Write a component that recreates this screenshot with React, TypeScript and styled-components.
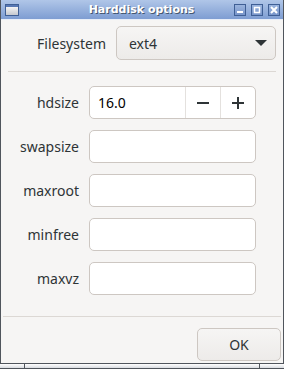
import React, { useState } from 'react';
import styled, { createGlobalStyle } from 'styled-components';

const Global = createGlobalStyle`
  html, body {
    margin: 0;
    padding: 0;
    background: #f6f5f4;
  }
  * { box-sizing: border-box; }
`;

const Frame = styled.div`
  width: 284px;
  height: 369px;
  display: flex;
  flex-direction: column;
  border-left: 1px solid #50555c;
  border-right: 1px solid #50555c;
  background: #f6f5f4;
  font-family: 'Noto Sans', 'DejaVu Sans', sans-serif;
  color: #2e3436;
`;

const TitleBar = styled.div`
  height: 20px;
  display: flex;
  align-items: center;
  padding: 0 3px 0 4px;
  background: linear-gradient(#b0c6e8, #7e9dd2);
  border-bottom: 1px solid #e8eef8;
`;

const Title = styled.div`
  flex: 1;
  text-align: center;
  font-family: 'DejaVu Sans', sans-serif;
  font-weight: bold;
  font-size: 11px;
  color: #ffffff;
  text-shadow: 1px 1px 0 #44566f;
  padding-left: 30px;
`;

const WinButtons = styled.div`
  display: flex;
  gap: 5px;
`;

const WinButton = styled.div`
  width: 12px;
  height: 12px;
  border: 1px solid #3f5f95;
  background: linear-gradient(#9ab4de, #7895ca);
  display: flex;
  align-items: center;
  justify-content: center;
`;

const Body = styled.div`
  flex: 1;
  display: flex;
  flex-direction: column;
`;

const TopRow = styled.div`
  display: flex;
  align-items: center;
  justify-content: flex-end;
  gap: 10px;
  padding: 6px 7px 0 0;
`;

const Label = styled.label`
  font-size: 14px;
  text-align: right;
`;

const Combo = styled.div`
  width: 160px;
  height: 34px;
  border: 1px solid #cdc7c2;
  border-radius: 5px;
  background: linear-gradient(#f6f5f4, #edebe9);
  display: flex;
  align-items: center;
  justify-content: space-between;
  padding: 0 8px 0 12px;
  font-size: 14px;
`;

const Separator = styled.div<{ $inset: number }>`
  height: 1px;
  background: #dcd8d4;
  margin: 0 ${(p) => p.$inset}px;
`;

const Fields = styled.div`
  display: grid;
  grid-template-columns: 78px 167px;
  column-gap: 10px;
  row-gap: 11px;
  align-items: center;
  padding: 14px 0 0 0;
  height: 244px;
  align-content: start;
`;

const Entry = styled.div`
  height: 33px;
  border: 1px solid #cdc7c2;
  border-radius: 5px;
  background: #ffffff;
  display: flex;
  align-items: stretch;
  font-size: 14px;
  overflow: hidden;
`;

const EntryText = styled.div`
  flex: 1;
  display: flex;
  align-items: center;
  padding-left: 8px;
  color: #000;
`;

const SpinButton = styled.div`
  width: 35px;
  border-left: 1px solid #e4e1de;
  display: flex;
  align-items: center;
  justify-content: center;
`;

const Actions = styled.div`
  display: flex;
  justify-content: flex-end;
  padding: 11px 2px 0 0;
  flex: 1;
`;

const Button = styled.button`
  width: 84px;
  height: 33px;
  border: 1px solid #cdc7c2;
  border-radius: 5px;
  background: linear-gradient(#f6f5f4, #edebe9);
  font-family: 'Noto Sans', 'DejaVu Sans', sans-serif;
  font-size: 14px;
  color: #2e3436;
  padding: 0;
`;

const BottomFrame = styled.div`
  height: 6px;
  border-top: 1px solid #50555c;
  border-bottom: 1px solid #50555c;
  background: linear-gradient(#ffffff, #d9dce1);
  display: grid;
  grid-template-columns: 25px 1fr 25px;
  margin: 0 -1px;
`;

const Grip = styled.div<{ $side: 'left' | 'right' | 'none' }>`
  border-right: ${(p) => (p.$side === 'left' ? '1px solid #50555c' : 'none')};
  border-left: ${(p) => (p.$side === 'right' ? '1px solid #50555c' : 'none')};
`;

const fields = ['swapsize', 'maxroot', 'minfree', 'maxvz'];

export default function App() {
  const [size, setSize] = useState(16);
  return (
    <>
      <Global />
      <Frame>
        <TitleBar>
          <svg width="14" height="12" viewBox="0 0 14 12">
            <defs>
              <linearGradient id="g" x1="0" y1="0" x2="0" y2="1">
                <stop offset="0" stopColor="#f4f4f4" />
                <stop offset="1" stopColor="#c4c8cf" />
              </linearGradient>
            </defs>
            <rect x="0.5" y="0.5" width="13" height="11" fill="#d9dce2" stroke="#3f5f95" />
            <rect x="1" y="1" width="12" height="2" fill="#5878b4" />
            <rect x="1" y="3" width="12" height="8" fill="url(#g)" />
          </svg>
          <Title>Harddisk options</Title>
          <WinButtons>
            <WinButton>
              <svg width="8" height="8" viewBox="0 0 8 8">
                <rect x="1" y="5" width="6" height="2" fill="#fff" />
              </svg>
            </WinButton>
            <WinButton>
              <svg width="8" height="8" viewBox="0 0 8 8">
                <rect x="1.5" y="1.5" width="5" height="5" fill="none" stroke="#fff" strokeWidth="1.5" />
              </svg>
            </WinButton>
            <WinButton>
              <svg width="8" height="8" viewBox="0 0 8 8">
                <path d="M1 1 L7 7 M7 1 L1 7" stroke="#fff" strokeWidth="2" />
              </svg>
            </WinButton>
          </WinButtons>
        </TitleBar>
        <Body>
          <TopRow>
            <Label>Filesystem</Label>
            <Combo>
              <span>ext4</span>
              <svg width="12" height="8" viewBox="0 0 12 8">
                <path d="M0 1 L12 1 L6 7 Z" fill="#2e3436" />
              </svg>
            </Combo>
          </TopRow>
          <div style={{ height: 11 }} />
          <Separator $inset={7} />
          <Fields>
            <Label>hdsize</Label>
            <Entry>
              <EntryText>{size.toFixed(1)}</EntryText>
              <SpinButton onClick={() => setSize(size - 1)}>
                <svg width="12" height="12" viewBox="0 0 12 12">
                  <rect x="0" y="5" width="12" height="2" fill="#2e3436" />
                </svg>
              </SpinButton>
              <SpinButton onClick={() => setSize(size + 1)}>
                <svg width="12" height="12" viewBox="0 0 12 12">
                  <rect x="0" y="5" width="12" height="2" fill="#2e3436" />
                  <rect x="5" y="0" width="2" height="12" fill="#2e3436" />
                </svg>
              </SpinButton>
            </Entry>
            {fields.map((f) => (
              <React.Fragment key={f}>
                <Label>{f}</Label>
                <Entry />
              </React.Fragment>
            ))}
          </Fields>
          <Separator $inset={2} />
          <Actions>
            <Button>OK</Button>
          </Actions>
        </Body>
        <BottomFrame>
          <Grip $side="left" />
          <Grip $side="none" />
          <Grip $side="right" />
        </BottomFrame>
      </Frame>
    </>
  );
}
